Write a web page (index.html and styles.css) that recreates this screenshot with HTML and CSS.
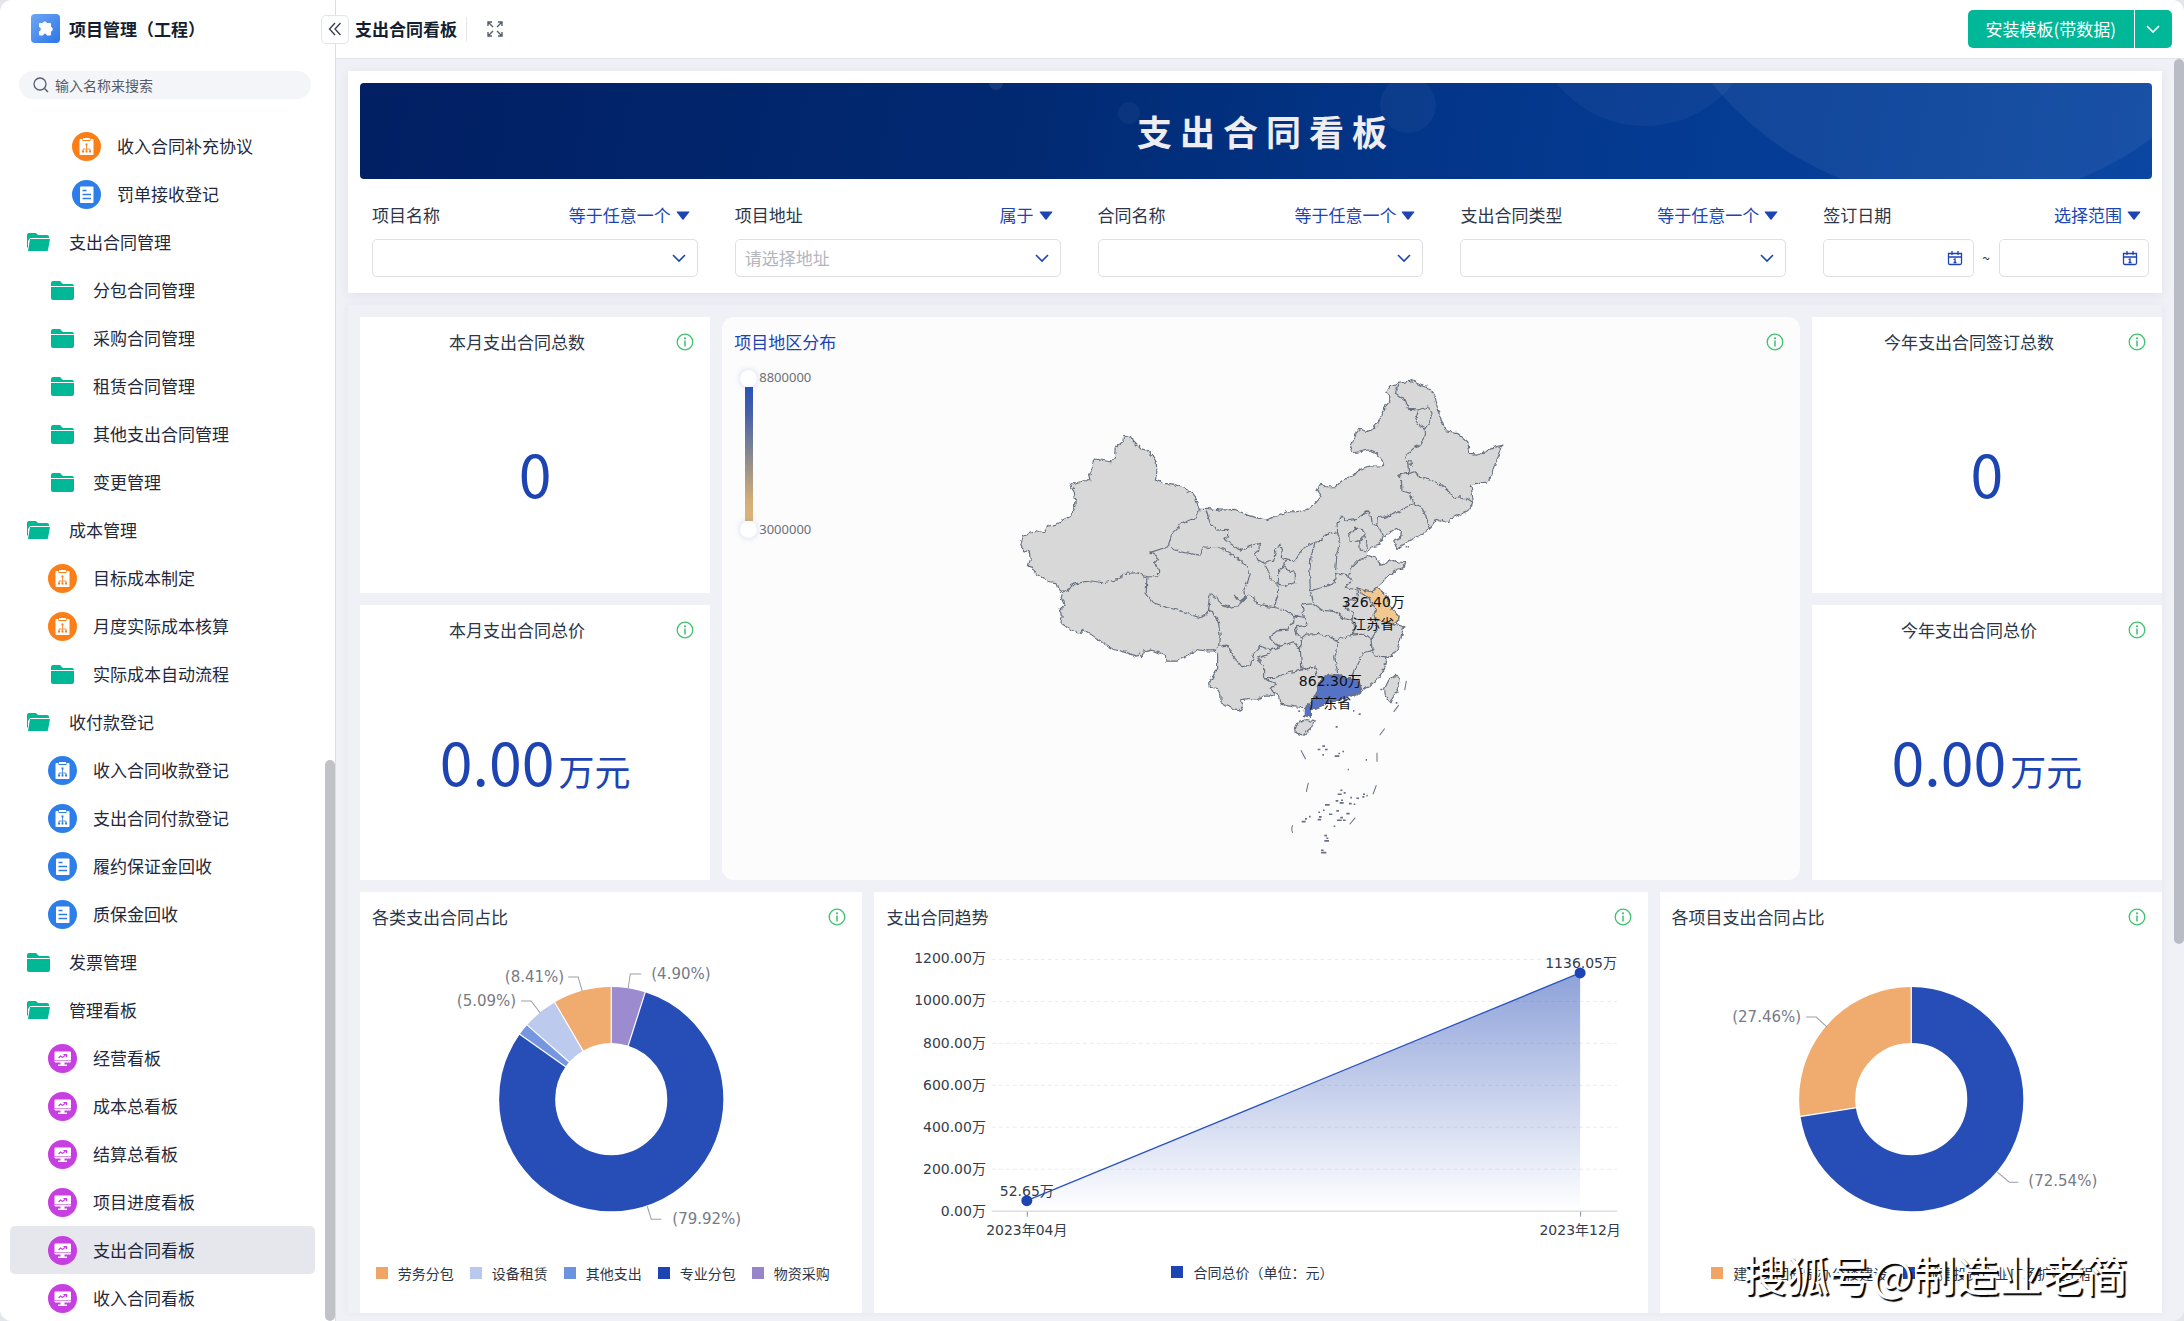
FILE: index.html
```html
<!DOCTYPE html>
<html lang="zh-CN">
<head>
  <meta charset="UTF-8">
  <meta name="viewport" content="width=device-width, initial-scale=1.0">
  <title>支出合同看板</title>
  <link rel="stylesheet" href="styles.css">
</head>
<body>
  <!-- shared icons -->
  <svg class="sprite" aria-hidden="true">
    <symbol id="i-folder" viewBox="0 0 29 29">
      <path d="M3 7a2 2 0 0 1 2-2h7l3 3h9a2 2 0 0 1 2 2H3z" fill="#00b796"/>
      <path d="M3 11h23v11a2 2 0 0 1-2 2H5a2 2 0 0 1-2-2z" fill="#00b796"/>
    </symbol>
    <symbol id="i-open" viewBox="0 0 29 29">
      <path d="M3 7a2 2 0 0 1 2-2h7l2 2h9a2 2 0 0 1 2 2v1H6l-2 3v7l-1-1z" fill="#00b796"/>
      <path d="M6 11h20l-2 11q0 1-1 1H4z" fill="#00b796"/>
    </symbol>
    <symbol id="i-flow" viewBox="0 0 29 29">
      <circle cx="14.5" cy="14.5" r="14.5"/>
      <path d="M8.500 7h2v2h8V7h2q1 0 1 1v14q0 1-1 1h-12q-1 0-1-1V8q0-1 1-1z" fill="#fff"/>
      <path d="M11 6h7v2h-7z" fill="#fff"/>
      <path d="M14.500 13v6M11 19.500v-2.500h7v2.500" fill="none" stroke="currentColor" stroke-width=".8"/>
      <path d="M13.500 11.500h2v2h-2zM10 18.500h2v2h-2zM13.500 18.500h2v2h-2zM17 18.500h2v2h-2z" fill="currentColor"/>
    </symbol>
    <symbol id="i-form" viewBox="0 0 29 29">
      <circle cx="14.5" cy="14.500" r="14.500"/>
      <rect x="8" y="6.500" width="13.500" height="16.500" rx="1" fill="#fff"/>
      <path d="M10.500 10.500h4M10.500 14.500h8.500M10.500 18.500h8.500" stroke="currentColor" stroke-width="1.300"/>
    </symbol>
    <symbol id="i-board" viewBox="0 0 29 29">
      <circle cx="14.500" cy="14.500" r="14.500"/>
      <rect x="6.500" y="7.500" width="16.500" height="11" rx="1" fill="#fff"/>
      <path d="M6.500 16.500h16.500" stroke="currentColor" stroke-width=".6"/>
      <path d="M12.500 18h4v2.500h2.500v1.500h-9v-1.500h2.500z" fill="#fff"/>
      <path d="M10.500 14l2-2 2 1.500 3.500-3M15.500 10.500h3v2.500" fill="none" stroke="currentColor" stroke-width="1.100"/>
    </symbol>
    <symbol id="i-down" viewBox="0 0 14 14">
      <path d="M1 4l6 6 6-6" fill="none" stroke="currentColor" stroke-width="1.600"/>
    </symbol>
    <symbol id="i-tri" viewBox="0 0 14 14">
      <path d="M1 3.500h12q.6 0 .2.700L7.600 11.500q-.6.600-1.200 0L.8 4.200Q.4 3.500 1 3.500z" fill="currentColor"/>
    </symbol>
    <symbol id="i-info" viewBox="0 0 18 18">
      <circle cx="9" cy="9" r="7.800" fill="none" stroke="currentColor" stroke-width="1.300"/>
      <circle cx="9" cy="5.300" r="1.100" fill="currentColor"/>
      <path d="M9 7.500v6" stroke="currentColor" stroke-width="1.500"/>
    </symbol>
    <symbol id="i-cal" viewBox="0 0 16 16">
      <path d="M1.500 3.500h13v9.500q0 1.500-1.500 1.500H3q-1.500 0-1.500-1.500zM1.500 7h13M5 1v4M11 1v4M6.500 9.500l1.500-.5v3.500M6.500 12.500h3" fill="none" stroke="currentColor" stroke-width="1.300"/>
    </symbol>
  </svg>

  <div class="app">
    <aside class="sidebar">
      <div class="brand">
        <svg class="logo" viewBox="0 0 29 29" aria-hidden="true">
          <defs>
            <linearGradient id="logoBg" x1="0" y1="0" x2="1" y2="1"><stop offset="0" stop-color="#6fa6f3"/><stop offset="1" stop-color="#2a76ea"/></linearGradient>
          </defs>
          <rect width="29" height="29" rx="4" fill="url(#logoBg)"/>
          <path d="M8.500 9.500h3a2.400 2.400 0 0 1 4.500 0h3.500V13a2.300 2.300 0 0 1 0 4.500V21H16a2 2 0 0 0-4 0H8.500v-3.500a2.300 2.300 0 0 0 0-4.500z" fill="#fff" stroke="#fff" stroke-linejoin="round"/>
        </svg>
        <span>项目管理（工程）</span>
      </div>
      <label class="search">
        <svg viewBox="0 0 16 16" aria-hidden="true"><circle cx="7" cy="7" r="6" fill="none" stroke="#555d6e" stroke-width="1.300"/><path d="M11.500 11.500L15 15" stroke="#555d6e" stroke-width="1.400"/></svg>
        <input type="text" placeholder="输入名称来搜索" aria-label="输入名称来搜索">
      </label>
      <nav class="menu">
        <a href="#" class="lv3 orange"><svg><use href="#i-flow"/></svg>收入合同补充协议</a>
        <a href="#" class="lv3 blue"><svg><use href="#i-form"/></svg>罚单接收登记</a>
        <a href="#" class="lv1"><svg><use href="#i-open"/></svg>支出合同管理</a>
        <a href="#" class="lv2"><svg><use href="#i-folder"/></svg>分包合同管理</a>
        <a href="#" class="lv2"><svg><use href="#i-folder"/></svg>采购合同管理</a>
        <a href="#" class="lv2"><svg><use href="#i-folder"/></svg>租赁合同管理</a>
        <a href="#" class="lv2"><svg><use href="#i-folder"/></svg>其他支出合同管理</a>
        <a href="#" class="lv2"><svg><use href="#i-folder"/></svg>变更管理</a>
        <a href="#" class="lv1"><svg><use href="#i-open"/></svg>成本管理</a>
        <a href="#" class="lv2 orange"><svg><use href="#i-flow"/></svg>目标成本制定</a>
        <a href="#" class="lv2 orange"><svg><use href="#i-flow"/></svg>月度实际成本核算</a>
        <a href="#" class="lv2"><svg><use href="#i-folder"/></svg>实际成本自动流程</a>
        <a href="#" class="lv1"><svg><use href="#i-open"/></svg>收付款登记</a>
        <a href="#" class="lv2 blue"><svg><use href="#i-flow"/></svg>收入合同收款登记</a>
        <a href="#" class="lv2 blue"><svg><use href="#i-flow"/></svg>支出合同付款登记</a>
        <a href="#" class="lv2 blue"><svg><use href="#i-form"/></svg>履约保证金回收</a>
        <a href="#" class="lv2 blue"><svg><use href="#i-form"/></svg>质保金回收</a>
        <a href="#" class="lv1"><svg><use href="#i-folder"/></svg>发票管理</a>
        <a href="#" class="lv1"><svg><use href="#i-open"/></svg>管理看板</a>
        <a href="#" class="lv2 purple"><svg><use href="#i-board"/></svg>经营看板</a>
        <a href="#" class="lv2 purple"><svg><use href="#i-board"/></svg>成本总看板</a>
        <a href="#" class="lv2 purple"><svg><use href="#i-board"/></svg>结算总看板</a>
        <a href="#" class="lv2 purple"><svg><use href="#i-board"/></svg>项目进度看板</a>
        <a href="#" class="lv2 purple active"><svg><use href="#i-board"/></svg>支出合同看板</a>
        <a href="#" class="lv2 purple"><svg><use href="#i-board"/></svg>收入合同看板</a>
      </nav>
      <div class="side-thumb"></div>
    </aside>

    <main class="main">
      <header class="header">
        <button class="collapse" aria-label="收起"><svg viewBox="0 0 14 14"><path d="M7 1L1.500 7 7 13M12.500 1L7 7l5.500 6" fill="none" stroke="#333b4d" stroke-width="1.300"/></svg></button>
        <h1>支出合同看板</h1>
        <button class="full" aria-label="全屏"><svg viewBox="0 0 16 16"><path d="M1 5V1h4M11 1h4v4M15 11v4h-4M5 15H1v-4M1.500 1.500L6 6M14.500 1.500L10 6M14.500 14.500L10 10M1.500 14.500L6 10" fill="none" stroke="#555d6e" stroke-width="1.400"/></svg></button>
        <div class="install">
          <button>安装模板(带数据)</button>
          <button class="more" aria-label="更多"><svg><use href="#i-down"/></svg></button>
        </div>
      </header>

      <div class="content">
        <section class="panel">
          <div class="banner">
            <svg viewBox="0 0 1792 96" preserveAspectRatio="xMaxYMid slice" aria-hidden="true">
              <g fill="#fff">
                <circle cx="636" cy="0" r="7" opacity=".08"/>
                <circle cx="769" cy="30" r="11" opacity=".04"/>
                <circle cx="1048" cy="22" r="28" opacity=".04"/>
                <circle cx="1285" cy="-70" r="113" opacity=".04"/>
                <circle cx="1600" cy="-200" r="319" opacity=".06"/>
              </g>
            </svg>
            <h2>支出合同看板</h2>
          </div>
          <form class="filters">
            <div class="filter">
              <div class="filter-top"><label for="f1">项目名称</label><button type="button">等于任意一个<svg><use href="#i-tri"/></svg></button></div>
              <div class="field"><select id="f1"><option></option></select><svg><use href="#i-down"/></svg></div>
            </div>
            <div class="filter">
              <div class="filter-top"><label for="f2">项目地址</label><button type="button">属于<svg><use href="#i-tri"/></svg></button></div>
              <div class="field"><select id="f2" class="empty"><option>请选择地址</option></select><svg><use href="#i-down"/></svg></div>
            </div>
            <div class="filter">
              <div class="filter-top"><label for="f3">合同名称</label><button type="button">等于任意一个<svg><use href="#i-tri"/></svg></button></div>
              <div class="field"><select id="f3"><option></option></select><svg><use href="#i-down"/></svg></div>
            </div>
            <div class="filter">
              <div class="filter-top"><label for="f4">支出合同类型</label><button type="button">等于任意一个<svg><use href="#i-tri"/></svg></button></div>
              <div class="field"><select id="f4"><option></option></select><svg><use href="#i-down"/></svg></div>
            </div>
            <div class="filter">
              <div class="filter-top"><label for="f5">签订日期</label><button type="button">选择范围<svg><use href="#i-tri"/></svg></button></div>
              <div class="range">
                <div class="field date"><input type="text" id="f5"><svg><use href="#i-cal"/></svg></div>
                <span>~</span>
                <div class="field date"><input type="text" aria-label="结束日期"><svg><use href="#i-cal"/></svg></div>
              </div>
            </div>
          </form>
        </section>

        <section class="board">
          <div class="row row-top">
            <div class="stack">
              <div class="card stat"><div class="card-title"><h3>本月支出合同总数</h3><svg><use href="#i-info"/></svg></div><p>0</p></div>
              <div class="card stat"><div class="card-title"><h3>本月支出合同总价</h3><svg><use href="#i-info"/></svg></div><p>0.00<small>万元</small></p></div>
            </div>

            <div class="card map-card">
              <div class="card-title"><h3>项目地区分布</h3><svg><use href="#i-info"/></svg></div>
              <div class="map-body">
                <div class="scale">
                  <div class="scale-bar"><i></i><b></b><i></i></div>
                  <div class="scale-text"><span>8800000</span><span>3000000</span></div>
                </div>
                <svg class="map" viewBox="0 0 1077 513" role="img" aria-label="项目地区分布">
                  <defs>
                    <filter id="rough" x="-2%" y="-2%" width="104%" height="104%">
                      <feTurbulence type="fractalNoise" baseFrequency=".2" numOctaves="2" seed="4" result="n"/>
                      <feDisplacementMap in="SourceGraphic" in2="n" scale="5" xChannelSelector="R" yChannelSelector="G"/>
                    </filter>
                  </defs>
                  <g filter="url(#rough)">
                    <g transform="translate(278 -7) scale(.33333)" stroke="#68707f" stroke-width="3.500" stroke-linejoin="round" fill="none">
                      <path fill="#d8d8d8" d="M62 553L70 570 88 576 90 600 84 618 98 622 106 640 130 655 148 665 168 668 172 684 188 697 183 712 192 735 178 748 186 770 182 788 205 805 240 820 250 808 280 828 310 850 340 868 375 876 410 888 420 878 424 893 432 876 455 870 475 878 495 882 497 903 530 903 560 885 590 868 615 872 640 872 652 885 652 925 640 945 628 965 630 982 650 985 662 1005 662 1025 680 1035 698 1045 720 1050 728 1035 718 1020 745 1015 775 1018 790 1008 810 1008 826 1000 838 1010 842 1032 880 1040 905 1042 915 1042 912 1065 930 1072 930 1050 955 1040 985 1028 1010 1020 1050 1008 1075 1000 1090 990 1110 975 1135 955 1145 940 1160 910 1155 895 1170 890 1190 870 1200 840 1205 820 1210 800 1195 795 1175 790 1195 785 1196 768 1185 755 1165 735 1158 705 1130 683 1150 665 1165 645 1190 628 1212 622 1216 608 1190 605 1170 598 1155 612 1138 615 1130 595 1100 585 1105 572 1115 560 1138 555 1148 530 1170 515 1188 505 1203 515 1200 535 1180 545 1190 565 1215 550 1240 535 1275 515 1290 505 1310 478 1345 488 1350 475 1375 465 1402 452 1415 435 1418 420 1412 375 1430 370 1460 370 1475 340 1485 310 1500 275 1505 255 1480 262 1455 275 1430 282 1408 280 1402 245 1370 218 1335 212 1325 185 1312 150 1305 110 1290 85 1265 78 1235 62 1195 70 1165 78 1155 95 1168 108 1168 125 1150 145 1138 180 1120 205 1100 215 1075 205 1062 235 1048 268 1055 278 1080 275 1105 270 1130 282 1148 305 1150 317 1105 318 1075 330 1062 345 1025 362 1005 380 975 380 962 368 950 392 962 410 945 430 920 448 890 455 860 455 830 468 797 480 765 472 735 462 705 448 660 450 620 445 597 445 580 402 545 382 520 372 490 370 465 360 470 335 468 305 455 285 440 270 420 265 400 245 390 228 370 230 368 245 345 262 342 295 330 305 285 297 278 320 268 345 272 362 250 362 210 374 220 390 228 425 218 450 215 465 190 480 165 493 140 500 130 518 110 512 90 520 70 528z"/>
                      <!-- west -->
                      <path d="M188 697L205 690 220 672 270 662 310 668 355 658 375 640 410 638 440 650 475 650 475 630 462 610 475 595 450 577 503 560 515 520 545 490 590 472 597 445M440 650L438 700 460 728 500 742 540 752 575 765 600 773 620 765 622 750 640 755 655 790 660 830 658 858 640 872M503 560L540 575 580 582 600 585 610 560 640 563 660 563 690 580 715 598 740 612 750 645 740 670 728 695 738 712 715 735 690 745 665 735 650 712 630 703 622 750"/>
                      <path d="M615 445L630 490 650 510 685 508 685 530 668 535 690 550 720 570 760 555 778 550 775 570 763 580 770 600 790 607 820 600 825 575 838 553 845 575 843 595 858 600 850 620 835 630 835 650 833 672 815 660 805 635 790 607M850 620L885 640 885 668 860 678 833 672 835 700 820 742 790 738 770 730 762 712 745 705 720 725 702 705"/>
                      <!-- north -->
                      <path d="M858 600L885 602 900 575 925 555 945 547 932 590 928 640 930 692 975 680 1002 668 1005 640 1010 580 1020 540 1012 518 970 525 968 540 945 547M1012 518L1010 490 1025 468 1040 482 1070 478 1100 452 1112 465 1115 488 1132 495 1140 510 1148 530M1132 495L1135 465 1150 475 1185 460 1210 445 1240 430 1260 440 1275 465 1290 505M1240 430L1230 400 1205 392 1203 360 1192 345 1225 340 1245 335 1255 352 1290 360 1320 372 1345 395 1365 415 1395 412 1415 425M1225 340L1222 310 1212 290 1240 265 1258 255 1275 225 1275 205 1255 195 1245 180 1255 150 1285 140 1295 160 1285 190 1270 210M1255 150L1225 148 1215 120 1185 100 1192 75"/>
                      <path d="M1050 543L1048 525 1062 505 1085 505 1095 520 1085 540 1065 545zM1085 530L1098 535 1100 560 1095 572 1080 570 1078 545zM1225 305L1236 305 1236 315 1225 315zM1005 640L1045 648 1050 625 1075 600 1100 590M1045 648L1055 658 1035 682 1070 690"/>
                      <!-- centre and south -->
                      <path d="M930 692L940 730 965 750 1005 755 1030 775 1055 780 1060 755 1035 745 1040 725 1075 710 1070 690M820 742L850 748 880 765 912 772 905 735 940 730M882 765L880 785 860 810 830 812 808 830 825 850 840 858 880 845 895 865 905 835 890 825 885 800 920 795 912 772M658 858L680 855 700 890 725 920 750 915 760 880 780 858 810 870 840 858M810 870L800 885 770 895 790 915 790 955 820 955 860 938 905 930 900 870 905 835 920 822 955 820 985 828 1005 838 1015 850 1003 890 1012 940M790 955L825 970 810 985 826 1000M1055 780L1065 800 1055 825 1010 838M1055 825L1090 822 1112 838 1130 810 1128 785M1112 838L1115 870 1085 880 1075 905 1055 945 1060 955M1115 870L1125 888 1160 890M905 930L945 920 950 945 960 958"/>
                      <path fill="#5672c4" d="M985 942L1025 945 1030 955 1055 955 1075 960 1085 992 1050 1008 1010 1020 985 1028 955 1040 930 1050 930 1072 912 1065 912 1045 930 1030 950 1005 950 980 965 955z"/>
                      <path fill="#f2c891" d="M1070 683L1085 690 1115 695 1130 683 1158 705 1165 735 1185 755 1196 768 1190 785 1175 790 1150 785 1125 780 1118 765 1130 750 1115 735 1105 712 1080 698z"/>
                      <path fill="#d8d8d8" d="M885 1105L893 1088 920 1078 942 1085 930 1108 908 1125 888 1118zM1190 945L1200 952 1195 985 1180 1010 1172 1028 1155 1008 1153 985 1165 960z"/>
                    </g>
                  </g>
                  <g transform="translate(278 -7) scale(.33333)" stroke="#68707f" stroke-width="3" fill="none">
                    <path d="M1218 962L1213 990M1195 1035L1180 1055M1153 1105L1138 1125M1130 1178L1130 1205M1128 1275L1118 1302M1065 1372L1048 1392M877 1395Q872 1406 877 1418M924 1268L918 1295M902 1170L916 1197"/>
                    <path stroke-width="5" d="M952 1168h8M966 1158h8M974 1168h8M966 1184h5M1003 1188h14M1014 1180h5M1026 1174h5M1006 1100h6M1075 1062h6M1058 1052h4M1096 1199h4M1042 1228h4M1012 1302h12M1020 1290h6M1030 1298h6M1006 1322h8M1018 1328h12M1022 1320h6M1050 1312h5M1046 1330h8M1060 1332h5M1068 1314h8M1088 1302h6M1086 1310h6M1098 1306h4M974 1334h14M954 1356h5M968 1350h5M986 1362h10M1008 1352h8M1038 1360h10M1020 1372h8M1010 1380h14M1028 1380h8M952 1378h10M956 1370h8M904 1384h12M914 1376h6M926 1369h5M1000 1398h5M972 1426h8M978 1434h6M972 1442h14M962 1470h8M962 1477h16M1140 988h6M1205 800h10M1202 824h8M1172 888h6M1150 912h8M1144 928h8M1186 1028h5M894 1053h5M1216 560h4M1222 560h4"/>
                  </g>
                  <g class="map-text">
                    <text x="651" y="240">326.40万</text>
                    <text x="651" y="262">江苏省</text>
                    <text x="608" y="319">862.30万</text>
                    <text x="608" y="341">广东省</text>
                  </g>
                </svg>
              </div>
            </div>

            <div class="stack">
              <div class="card stat"><div class="card-title"><h3>今年支出合同签订总数</h3><svg><use href="#i-info"/></svg></div><p>0</p></div>
              <div class="card stat"><div class="card-title"><h3>今年支出合同总价</h3><svg><use href="#i-info"/></svg></div><p>0.00<small>万元</small></p></div>
            </div>
          </div>

          <div class="row row-bottom">
            <div class="card">
              <div class="card-title"><h3>各类支出合同占比</h3><svg><use href="#i-info"/></svg></div>
              <svg class="chart" viewBox="0 0 502 306" role="img" aria-label="各类支出合同占比">
                <g transform="translate(251 157)">
                  <g class="ring" transform="rotate(-90)">
                    <circle r="84" pathLength="100" stroke="#9d8bd0" stroke-dasharray="4.900 100"/>
                    <circle r="84" pathLength="100" stroke="#264eb6" stroke-dasharray="79.920 100" stroke-dashoffset="-4.900"/>
                    <circle r="84" pathLength="100" stroke="#7696e0" stroke-dasharray="1.680 100" stroke-dashoffset="-84.820"/>
                    <circle r="84" pathLength="100" stroke="#bccaee" stroke-dasharray="5.090 100" stroke-dashoffset="-86.500"/>
                    <circle r="84" pathLength="100" stroke="#f0ab6e" stroke-dasharray="8.410 100" stroke-dashoffset="-91.590"/>
                  </g>
                  <g stroke="#fff" stroke-width="1.200">
                    <path d="M0-55V-113"/>
                    <path d="M0-55V-113" transform="rotate(17.640)"/>
                    <path d="M0-55V-113" transform="rotate(305.350)"/>
                    <path d="M0-55V-113" transform="rotate(311.400)"/>
                    <path d="M0-55V-113" transform="rotate(329.720)"/>
                  </g>
                </g>
                <g class="leader">
                  <path d="M268 46l2-14h11M222 49l-4-14h-10M180 71l-9-12h-10M287 264l4 13h10"/>
                </g>
                <g class="pie-text">
                  <text x="291" y="37">(4.90%)</text>
                  <text x="204" y="40" text-anchor="end">(8.41%)</text>
                  <text x="156" y="64" text-anchor="end">(5.09%)</text>
                  <text x="312" y="282">(79.92%)</text>
                </g>
              </svg>
              <ul class="legend">
                <li class="c-orange">劳务分包</li>
                <li class="c-light">设备租赁</li>
                <li class="c-mid">其他支出</li>
                <li class="c-blue">专业分包</li>
                <li class="c-purple">物资采购</li>
              </ul>
            </div>

            <div class="card">
              <div class="card-title"><h3>支出合同趋势</h3><svg><use href="#i-info"/></svg></div>
              <svg class="chart" viewBox="0 0 774 306" role="img" aria-label="支出合同趋势">
                <defs>
                  <linearGradient id="area" x1="0" y1="0" x2="0" y2="1"><stop offset="0" stop-color="#1c44b3" stop-opacity=".5"/><stop offset="1" stop-color="#1c44b3" stop-opacity="0"/></linearGradient>
                </defs>
                <path d="M118 17.500H744M118 59.500H744M118 101.500H744M118 143.500H744M118 185.500H744M118 227.500H744" stroke="#ececef" stroke-dasharray="4 3"/>
                <path d="M118 269.500H744" stroke="#ccced3"/>
                <path d="M153.500 270v5M707.500 270v5" stroke="#8a8f99"/>
                <path d="M153 259L707 31V269H153z" fill="url(#area)"/>
                <path d="M153 259L707 31" stroke="#2b54bb" stroke-width="1.300"/>
                <g class="axis-text" text-anchor="end">
                  <text x="112" y="21">1200.00万</text>
                  <text x="112" y="63">1000.00万</text>
                  <text x="112" y="106">800.00万</text>
                  <text x="112" y="148">600.00万</text>
                  <text x="112" y="190">400.00万</text>
                  <text x="112" y="232">200.00万</text>
                  <text x="112" y="274">0.00万</text>
                </g>
                <g class="axis-text" text-anchor="middle">
                  <text x="153" y="293">2023年04月</text>
                  <text x="707" y="293">2023年12月</text>
                  <text x="153" y="254">52.65万</text>
                  <text x="708" y="26">1136.05万</text>
                </g>
                <circle cx="153" cy="259" r="5.500" fill="#1c44b3"/>
                <circle cx="707" cy="31" r="5.500" fill="#1c44b3"/>
              </svg>
              <ul class="legend">
                <li class="c-blue">合同总价（单位：元）</li>
              </ul>
            </div>

            <div class="card">
              <div class="card-title"><h3>各项目支出合同占比</h3><svg><use href="#i-info"/></svg></div>
              <svg class="chart" viewBox="0 0 502 306" role="img" aria-label="各项目支出合同占比">
                <g transform="translate(251 157)">
                  <g class="ring" transform="rotate(-90)">
                    <circle r="84" pathLength="100" stroke="#264eb6" stroke-dasharray="72.540 100"/>
                    <circle r="84" pathLength="100" stroke="#f0ab6e" stroke-dasharray="27.460 100" stroke-dashoffset="-72.540"/>
                  </g>
                  <g stroke="#fff" stroke-width="1.200">
                    <path d="M0-55V-113"/>
                    <path d="M0-55V-113" transform="rotate(261.140)"/>
                  </g>
                </g>
                <g class="leader">
                  <path d="M167 85l-11-10h-10M337 230l12 10h9"/>
                </g>
                <g class="pie-text">
                  <text x="141" y="80" text-anchor="end">(27.46%)</text>
                  <text x="368" y="244">(72.54%)</text>
                </g>
              </svg>
              <ul class="legend">
                <li class="c-orange">建工集团研制办公楼建设</li>
                <li class="c-blue">城建投资产业广场扩建工程</li>
              </ul>
            </div>
          </div>
        </section>
      </div>
      <div class="main-thumb"></div>
    </main>
    <div class="watermark">搜狐号@制造业老简</div>
  </div>
</body>
</html>
```
FILE: styles.css
```css
* {
  box-sizing: border-box;
}

body {
  margin: 0;
  background: #e4e5ea;
  color: #2b3648;
  font-family: "Noto Sans CJK SC", sans-serif;
  font-size: 17px;
  line-height: 24px;
}

h1, h2, h3, p, ul {
  margin: 0;
  padding: 0;
  font-weight: normal;
  font-size: 17px;
}

button, input, select {
  font: inherit;
  color: inherit;
  border: none;
  background: none;
  padding: 0;
  margin: 0;
}

button {
  cursor: pointer;
}

svg {
  display: block;
  flex: none;
}

.sprite {
  position: absolute;
  width: 0;
  height: 0;
}

.app {
  position: relative;
  display: flex;
  height: 100vh;
  overflow: hidden;
  border-radius: 12px;
  background: #f0f1f7;
}

/* sidebar */
.sidebar {
  position: relative;
  flex: none;
  width: 336px;
  display: flex;
  flex-direction: column;
  background: #fff;
  border-right: 1px solid #dcdee3;
}

.brand {
  display: flex;
  align-items: center;
  gap: 9px;
  padding: 14px 31px 0;
  font-weight: bold;
  color: #141e31;
}

.logo {
  width: 29px;
  height: 29px;
}

.search {
  display: flex;
  align-items: center;
  gap: 6px;
  height: 28px;
  margin: 28px 24px 23px 19px;
  padding: 0 14px;
  border-radius: 14px;
  background: #f4f5f9;
}

.search svg {
  width: 16px;
  height: 16px;
}

.search input {
  flex: 1;
  min-width: 0;
  font-size: 14px;
  outline: none;
}

.search input::placeholder {
  color: #555b66;
}

.menu {
  flex: 1;
  min-height: 0;
  overflow: hidden;
  padding: 0 20px 0 10px;
}

.menu a {
  display: flex;
  align-items: center;
  gap: 16px;
  height: 48px;
  border-radius: 5px;
  color: #1f293b;
  text-decoration: none;
}

.menu svg {
  width: 29px;
  height: 29px;
  fill: currentColor;
}

.menu .lv1 { padding-left: 14px; }
.menu .lv2 { padding-left: 38px; }
.menu .lv3 { padding-left: 62px; }

.orange svg { color: #fb7f18; }
.blue svg { color: #2e7eea; }
.purple svg { color: #c73fe0; }

.menu .active {
  background: #e5e7ec;
}

.side-thumb,
.main-thumb {
  position: absolute;
  right: 0;
  width: 10px;
  border-radius: 5px;
  background: #c1c2c8;
}

.side-thumb {
  bottom: 0;
  height: 42.5%;
}

.main-thumb {
  top: 59px;
  height: 67%;
  background: #b9bcc5;
}

/* header */
.main {
  position: relative;
  flex: 1;
  min-width: 0;
}

.header {
  display: flex;
  align-items: center;
  height: 59px;
  padding-right: 12px;
  background: #fff;
  border-bottom: 1px solid #e4e5e9;
}

.collapse {
  position: relative;
  width: 28px;
  height: 29px;
  margin-left: -15px;
  display: flex;
  align-items: center;
  justify-content: center;
  border: 1px solid #e4e5e9;
  border-radius: 5px;
  background: #fff;
}

.collapse svg {
  width: 14px;
  height: 14px;
}

.header h1 {
  margin-left: 6px;
  padding-right: 9px;
  border-right: 1px solid #e4e5e9;
  font-weight: bold;
  color: #141e31;
}

.full {
  margin-left: 20px;
}

.full svg {
  width: 16px;
  height: 16px;
}

.install {
  display: flex;
  height: 38px;
  margin-left: auto;
  border-radius: 5px;
  overflow: hidden;
  color: #fff;
  background: #00b798;
}

.install button {
  padding: 0 18px;
}

.install .more {
  width: 38px;
  padding: 0 11px;
  border-left: 1px solid #fff;
}

.more svg {
  width: 14px;
  height: 14px;
}

/* filter panel */
.content {
  padding: 12px 22px 12px 12px;
}

.panel {
  padding: 12px 10px 16px 12px;
  background: #fff;
  box-shadow: 0 2px 10px rgba(40, 40, 100, 0.08);
}

.banner {
  position: relative;
  display: flex;
  align-items: center;
  justify-content: center;
  height: 96px;
  border-radius: 4px;
  overflow: hidden;
  background: linear-gradient(100deg, #011f63 0%, #012a73 38%, #03368a 60%, #053d96 80%, #0b47a2 100%);
}

.banner svg {
  position: absolute;
  top: 0;
  right: 0;
  width: 100%;
  height: 100%;
}

.banner h2 {
  position: relative;
  padding-left: 20px;
  color: #eeeef2;
  font-size: 35px;
  line-height: 48px;
  font-weight: bold;
  letter-spacing: 8px;
}

.filters {
  display: grid;
  grid-template-columns: repeat(5, 1fr);
  gap: 37px;
  padding: 21px 3px 0 12px;
}

.filter-top {
  display: flex;
  align-items: center;
  justify-content: space-between;
  height: 30px;
  margin-bottom: 9px;
  padding-right: 8px;
}

.filter-top button {
  display: flex;
  align-items: center;
  gap: 5px;
  color: #1c44b3;
}

.filter-top svg {
  width: 14px;
  height: 14px;
}

.field {
  position: relative;
  flex: 1;
  color: #1c44b3;
}

.field select,
.field input {
  display: block;
  appearance: none;
  width: 100%;
  height: 38px;
  padding: 0 9px;
  border: 1px solid #dddfe3;
  border-radius: 5px;
  background: #fff;
}

.field .empty {
  color: #b3b6bd;
}

.field svg {
  position: absolute;
  top: 12px;
  right: 12px;
  width: 14px;
  height: 14px;
  pointer-events: none;
}

.date svg {
  top: 11px;
  right: 11px;
  width: 16px;
  height: 16px;
}

.range {
  display: flex;
  align-items: center;
}

.range span {
  width: 25px;
  text-align: center;
  font-size: 14px;
}

/* dashboard cards */
.board {
  margin-top: 12px;
  padding: 12px 0 0 12px;
  box-shadow: 0 0 8px rgba(40, 40, 100, 0.05);
}

.row {
  display: grid;
  gap: 12px;
}

.row-top {
  grid-template-columns: 13fr 40fr 13fr;
}

.row-bottom {
  grid-template-columns: 13fr 20fr 13fr;
  margin-top: 12px;
}

.stack {
  display: grid;
  grid-template-rows: 1fr 1fr;
  gap: 12px;
}

.card {
  position: relative;
  min-width: 0;
  background: #fff;
}

.card-title {
  display: flex;
  align-items: center;
  justify-content: space-between;
  height: 50px;
  padding: 0 16px 0 12px;
}

.card-title svg {
  width: 18px;
  height: 18px;
  color: #3fc16f;
}

.stat {
  display: flex;
  flex-direction: column;
}

.stat h3 {
  flex: 1;
  padding-right: 14px;
  text-align: center;
}

.stat p {
  flex: 1;
  display: flex;
  align-items: baseline;
  justify-content: center;
  padding-top: 61px;
  color: #1c44b3;
  font-size: 59px;
  line-height: 90px;
}

.stat small {
  margin-left: 4px;
  font-size: 36px;
}

.map-card {
  border-radius: 12px;
  background: #fcfcfd;
}

.map-card h3 {
  color: #1c44b3;
}

.map-body {
  position: relative;
}

.map {
  width: 100%;
}

.map-text {
  font-family: "DejaVu Sans", "Noto Sans CJK SC", sans-serif;
  font-size: 14px;
  text-anchor: middle;
  fill: #111;
}

.scale {
  position: absolute;
  top: 3px;
  left: 18px;
  display: flex;
  height: 168px;
  gap: 2px;
}

.scale-bar {
  display: flex;
  flex-direction: column;
  align-items: center;
}

.scale-bar i {
  width: 17px;
  height: 17px;
  border-radius: 50%;
  background: #fff;
  box-shadow: 0 0 6px rgba(40, 70, 180, 0.2);
}

.scale-bar b {
  flex: 1;
  width: 8px;
  background: linear-gradient(#2a52b8, #4860a8 20%, #85878f 50%, #d5ad76 85%, #dcb57c);
}

.scale-text {
  display: flex;
  flex-direction: column;
  justify-content: space-between;
  padding-bottom: 2px;
  font-family: "Noto Sans", sans-serif;
  font-size: 13px;
  line-height: 14px;
  color: #6b7078;
}

/* charts */
.chart {
  width: 100%;
}

.ring circle {
  fill: none;
  stroke-width: 56;
}

.leader path {
  fill: none;
  stroke: #9a9ea6;
}

.pie-text {
  font-family: "DejaVu Sans", sans-serif;
  font-size: 15px;
  fill: #767b85;
}

.axis-text {
  font-family: "DejaVu Sans", "Noto Sans CJK SC", sans-serif;
  font-size: 14px;
  fill: #333c4d;
}

.legend {
  display: flex;
  align-items: center;
  justify-content: center;
  gap: 16px;
  height: 64px;
  padding: 0 17px 16px 0;
  list-style: none;
  font-size: 14px;
  white-space: nowrap;
}

.legend li {
  display: flex;
  align-items: center;
  gap: 10px;
}

.legend li::before {
  content: "";
  width: 12px;
  height: 12px;
  background: var(--c);
}

.c-orange { --c: #f0a566; }
.c-light { --c: #b9c8ec; }
.c-mid { --c: #6d93df; }
.c-blue { --c: #1c44b3; }
.c-purple { --c: #9785cb; }

/* site mark over the lower right corner */
.watermark {
  position: absolute;
  right: 56px;
  bottom: 16px;
  color: #fff;
  font-size: 43px;
  line-height: 64px;
  text-shadow: 2px 2px 1px #000;
}
```
